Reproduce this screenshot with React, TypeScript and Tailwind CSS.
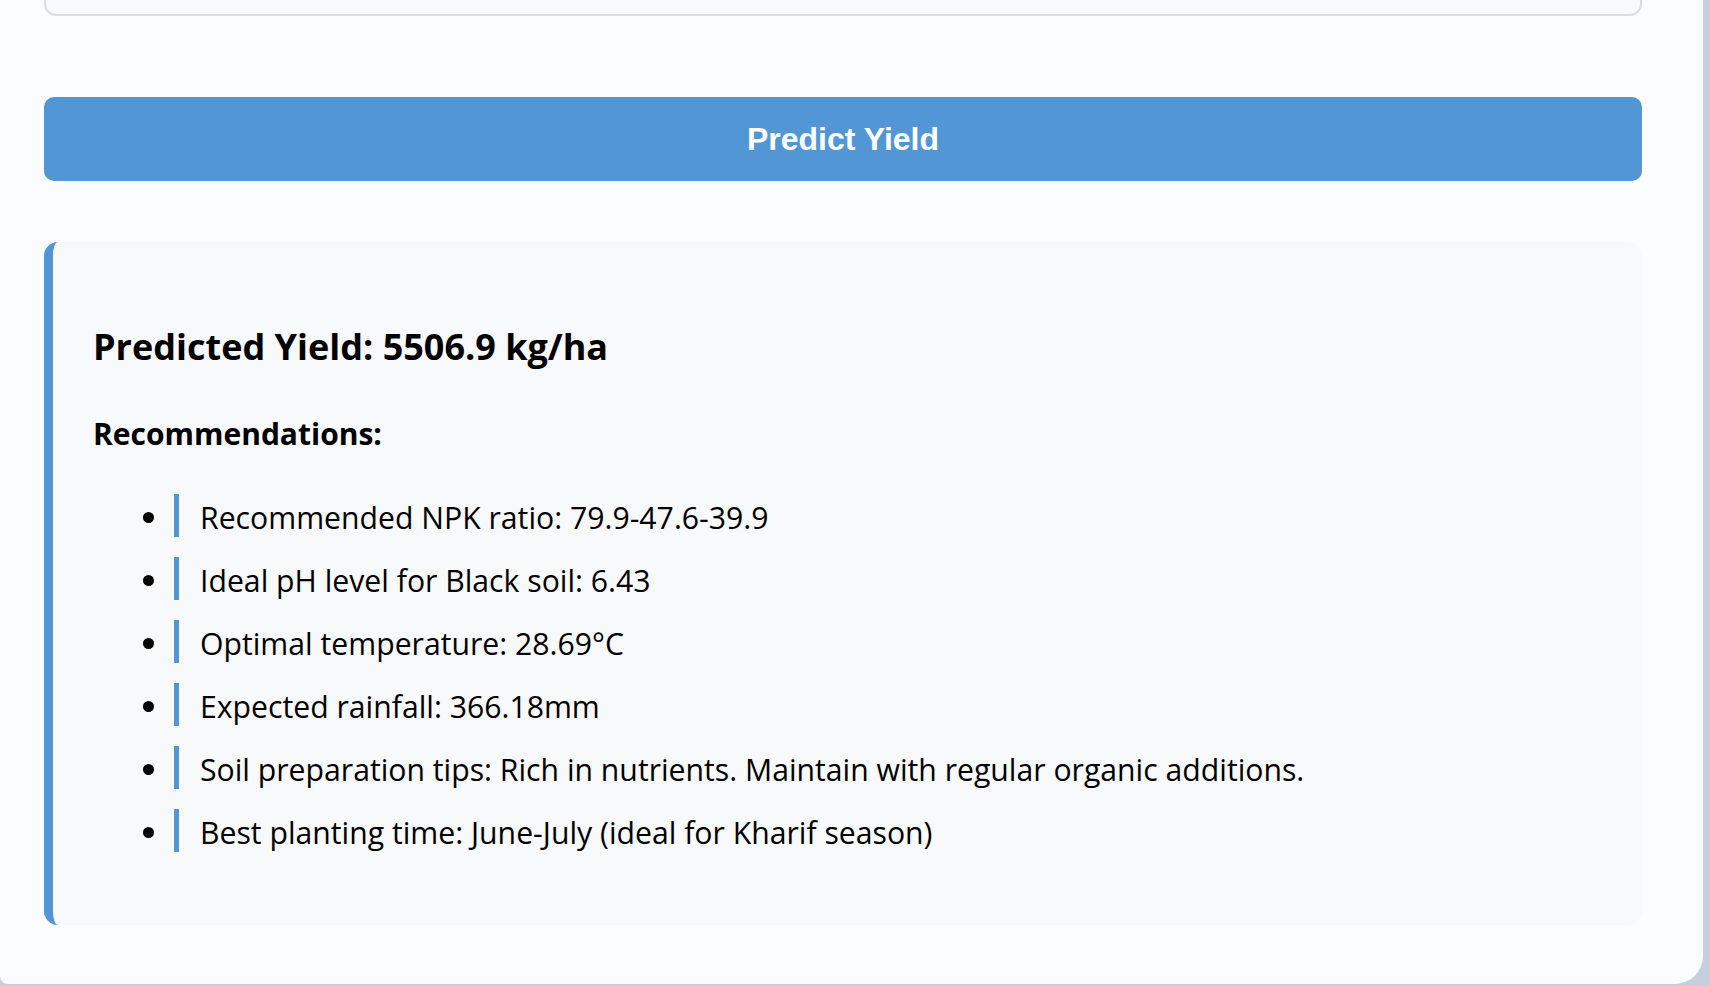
import React from "react";

const recommendations = [
  "Recommended NPK ratio: 79.9-47.6-39.9",
  "Ideal pH level for Black soil: 6.43",
  "Optimal temperature: 28.69°C",
  "Expected rainfall: 366.18mm",
  "Soil preparation tips: Rich in nutrients. Maintain with regular organic additions.",
  "Best planting time: June-July (ideal for Kharif season)",
];

export default function App() {
  return (
    <div className="min-h-screen w-full bg-[#c6cfdd] flex">
      {/* Main card */}
      <div className="w-[1703px] h-[984px] bg-[#fbfcfd] rounded-br-[28px] rounded-bl-[8px] pl-[44px] pr-[61px] flex flex-col">
        {/* bottom of the last form field (scrolled off) */}
        <div className="h-[16px] w-full bg-[#f8f9fa] border-x-2 border-b-2 border-[#dcdddf] rounded-b-[12px]" />

        {/* Predict button */}
        <button
          className="mt-[81px] h-[84px] w-full bg-[#5296d5] rounded-[10px] text-white text-[32px] font-bold"
          style={{ fontFamily: '"Liberation Sans", Arial, sans-serif' }}
        >
          Predict Yield
        </button>

        {/* Result */}
        <div
          className="mt-[61px] w-full bg-[#f8f9fb] border-l-[9px] border-[#5296d5] rounded-[14px] pl-[40px] pt-[84px] pb-[73px] text-black"
          style={{ fontFamily: '"Open Sans", "Noto Sans", sans-serif' }}
        >
          <h3 className="text-[36px] leading-[42px] font-bold">
            Predicted Yield: 5506.9 kg/ha
          </h3>
          <h4 className="mt-[48px] text-[30px] leading-[36px] font-bold">
            Recommendations:
          </h4>
          <ul className="mt-[42px] flex flex-col gap-[20px]">
            {recommendations.map((item) => (
              <li key={item} className="flex items-center h-[43px]">
                <span className="ml-[50px] mt-[4px] w-[11px] h-[11px] rounded-full bg-black shrink-0" />
                <div className="ml-[20px] h-full border-l-[5px] border-[#5296d5] pl-[21px] pt-[3px] text-[30.2px] leading-[42px]">
                  {item}
                </div>
              </li>
            ))}
          </ul>
        </div>
      </div>
    </div>
  );
}
